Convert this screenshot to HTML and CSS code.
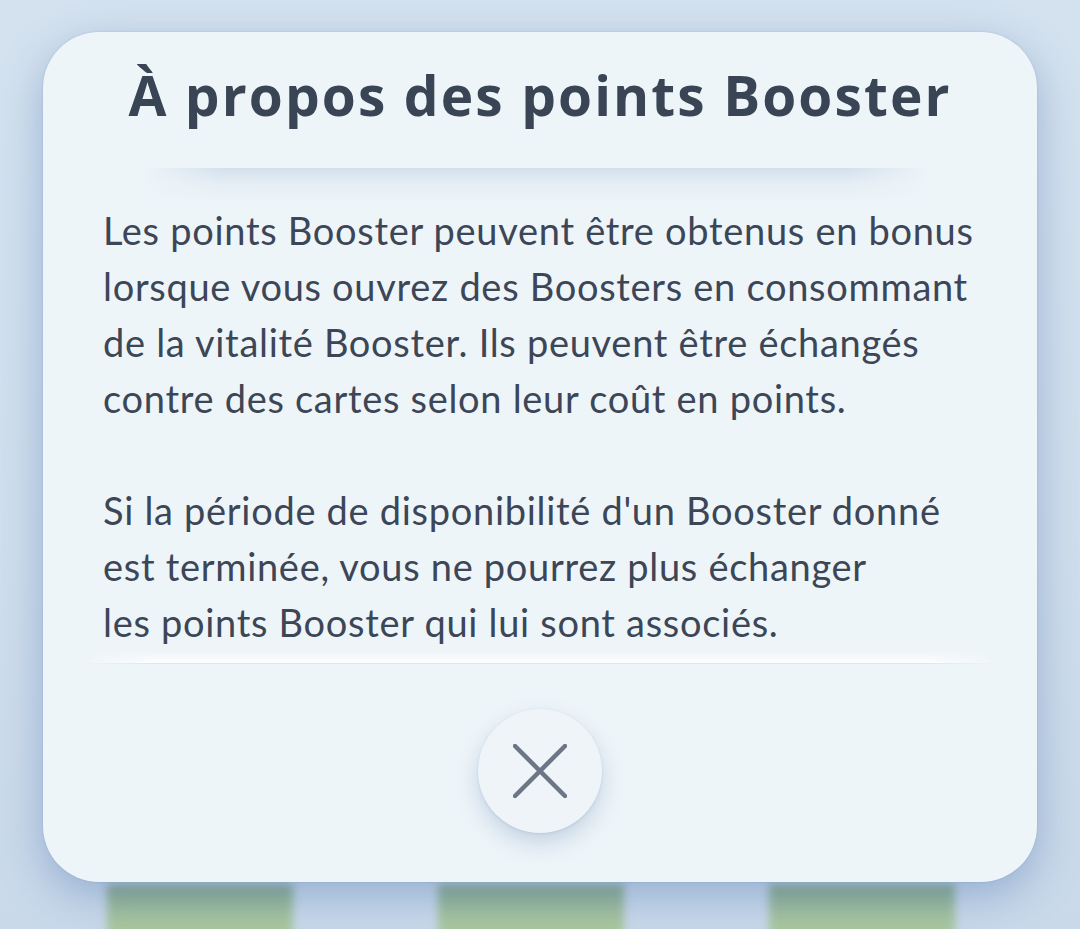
FILE: index.html
```html
<!DOCTYPE html>
<html lang="fr">
<head>
<meta charset="utf-8">
<title>À propos des points Booster</title>
<link rel="stylesheet" href="styles.css">
</head>
<body>
<div class="scene">
  <div class="backdrop">
    <div class="tile"></div>
    <div class="tile"></div>
    <div class="tile"></div>
  </div>
  <div class="modal">
    <h1 class="title">À propos des points Booster</h1>
    <div class="divider-top"></div>
    <div class="content">
      <p class="para">Les points Booster peuvent être obtenus en bonus<br>lorsque vous ouvrez des Boosters en consommant<br>de la vitalité Booster. Ils peuvent être échangés<br>contre des cartes selon leur coût en points.</p>
      <p class="para">Si la période de disponibilité d'un Booster donné<br>est terminée, vous ne pourrez plus échanger<br>les points Booster qui lui sont associés.</p>
    </div>
    <div class="divider-bottom"></div>
    <div class="actions">
      <button class="close" aria-label="Fermer">
        <svg width="54" height="54" viewBox="0 0 54 54">
          <path d="M2 2 L52 52 M52 2 L2 52" stroke="#6c7686" stroke-width="4.5" stroke-linecap="round" fill="none"/>
        </svg>
      </button>
    </div>
  </div>
</div>
</body>
</html>
```
FILE: styles.css
```css
* { box-sizing: border-box; }
html, body { margin: 0; padding: 0; }
body {
  width: 1080px;
  height: 929px;
  overflow: hidden;
  background: linear-gradient(to bottom, #d4e2ef 0%, #d0deec 60%, #c9d9ea 100%);
  font-family: "Lato", "Open Sans", sans-serif;
}
.scene {
  position: relative;
  width: 1080px;
  height: 929px;
}
.backdrop {
  display: flex;
  gap: 145px;
  padding: 884px 0 0 107px;
}
.tile {
  width: 186px;
  height: 70px;
  background: linear-gradient(to bottom, #8aa98e 0%, #a3c19d 40%, #b6d29e 100%);
  filter: blur(4px);
}
.modal {
  position: absolute;
  left: 43px;
  top: 32px;
  width: 994px;
  height: 850px;
  border-radius: 56px;
  background: #eef5f9;
  box-shadow: 0 14px 44px rgba(70, 110, 170, 0.4), 0 0 2px rgba(120, 150, 190, 0.4);
  display: flex;
  flex-direction: column;
  align-items: stretch;
}
.title {
  margin: 0;
  padding-top: 31px;
  height: 136px;
  text-align: center;
  font-family: "Open Sans", "Lato", sans-serif;
  font-size: 55px;
  font-weight: 700;
  color: #394455;
  letter-spacing: 2.1px;
  line-height: 64px;
  white-space: nowrap;
}
.divider-top {
  margin: 0 110px 0 100px;
  height: 34px;
  background: linear-gradient(to bottom, rgba(190, 208, 226, 0.55) 0%, rgba(200, 215, 230, 0.25) 45%, rgba(238, 245, 249, 0) 100%);
  -webkit-mask-image: linear-gradient(to right, transparent 0%, #000 10%, #000 90%, transparent 100%);
  mask-image: linear-gradient(to right, transparent 0%, #000 10%, #000 90%, transparent 100%);
}
.content {
  padding: 0 20px 0 60px;
}
.para {
  margin: 0 0 56px 0;
  font-size: 38px;
  line-height: 56px;
  letter-spacing: 0.7px;
  color: #3c4657;
  white-space: nowrap;
}
.para:last-child { margin-bottom: 0; }
.divider-bottom {
  margin: 0 40px 0 40px;
  height: 14px;
  background: linear-gradient(to bottom, rgba(255, 255, 255, 0) 0%, rgba(255, 255, 255, 0.9) 100%);
  border-bottom: 1px solid rgba(215, 228, 238, 0.9);
  -webkit-mask-image: linear-gradient(to right, transparent 0%, #000 8%, #000 92%, transparent 100%);
  mask-image: linear-gradient(to right, transparent 0%, #000 8%, #000 92%, transparent 100%);
}
.actions {
  display: flex;
  justify-content: center;
  padding-top: 45px;
}
.close {
  width: 124px;
  height: 124px;
  border-radius: 50%;
  border: none;
  background: #eef4f8;
  box-shadow: 0 10px 22px rgba(110, 140, 180, 0.32), 0 1px 3px rgba(140, 165, 195, 0.25);
  display: flex;
  align-items: center;
  justify-content: center;
  padding: 0;
}
```
